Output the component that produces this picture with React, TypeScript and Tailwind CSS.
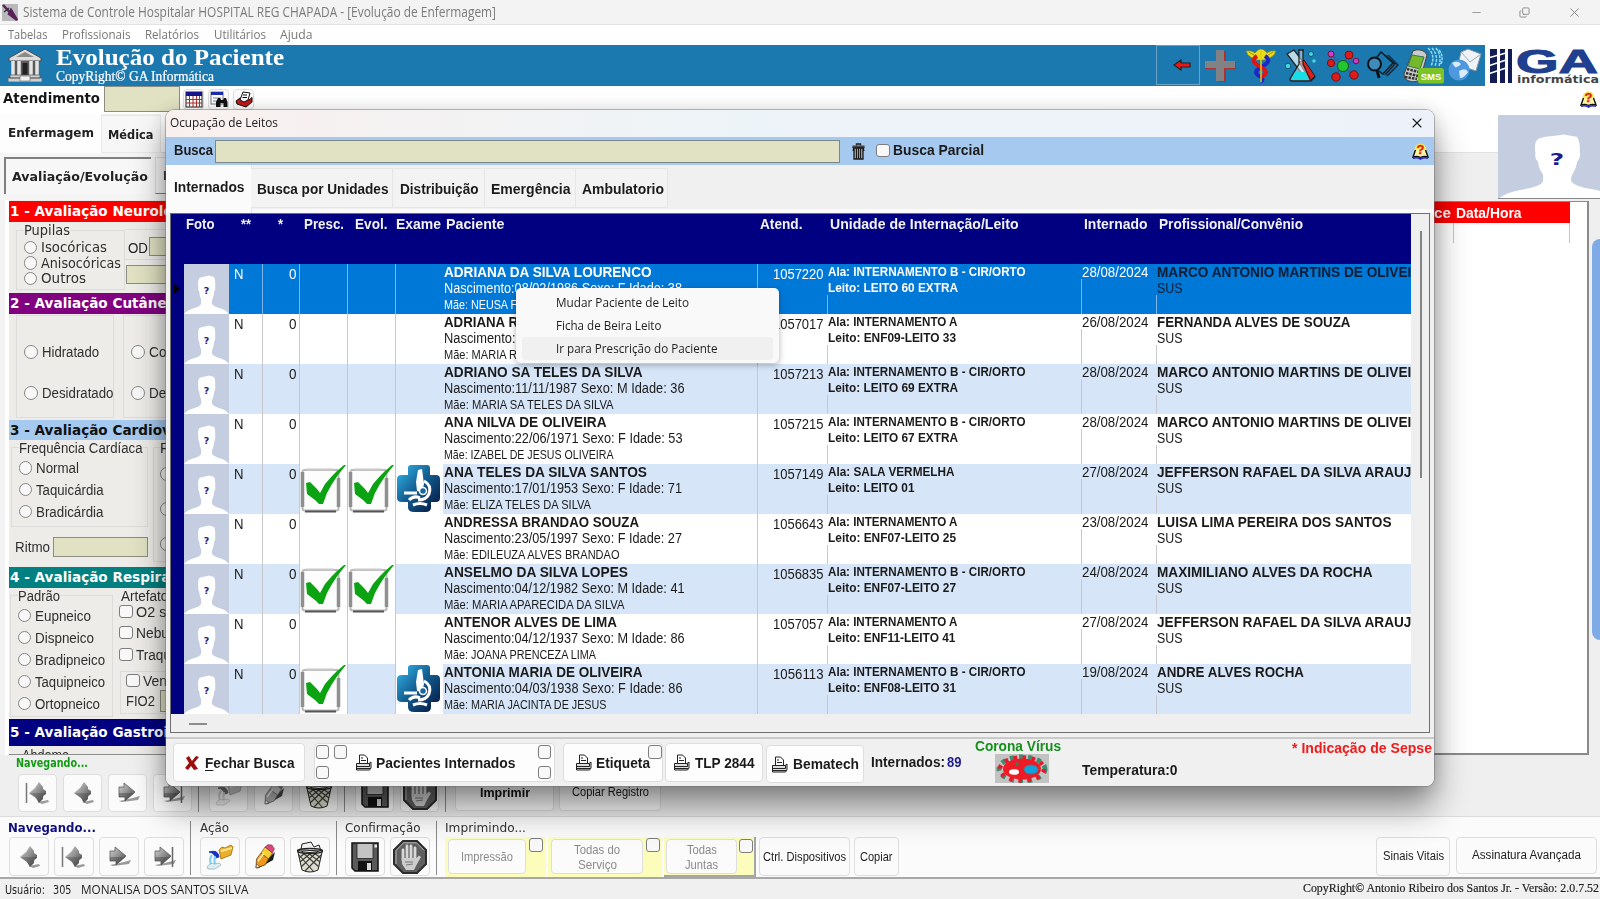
import { useLayoutEffect, useRef, useState } from "react";
import type { ReactNode } from "react";
import { X, Minus, Copy } from "lucide-react";

const arial = "font-['Liberation_Sans',Arial,sans-serif]";
const verdana = "font-['DejaVu_Sans',Verdana,sans-serif]";
const segoe = "font-['Open_Sans','Noto_Sans',sans-serif]";
const times = "font-['Liberation_Serif','Times_New_Roman',serif]";

/* Text that is condensed or expanded horizontally to a given width. */
function T({ w, className = "", children }: { w: number; className?: string; children: ReactNode }) {
  const ref = useRef<HTMLSpanElement>(null);
  const [scale, setScale] = useState(1);
  useLayoutEffect(() => {
    if (ref.current) setScale(w / ref.current.getBoundingClientRect().width);
  }, [w]);
  return (
    <span className={`block shrink-0 leading-none ${className}`} style={{ width: w }}>
      <span ref={ref} className="block w-max origin-left whitespace-pre" style={{ transform: `scaleX(${scale})` }}>
        {children}
      </span>
    </span>
  );
}

/* ---------- icons ---------- */

function Person({ className = "" }: { className?: string }) {
  return (
    <svg viewBox="0 0 45 50" preserveAspectRatio="none" className={className}>
      <rect width="45" height="50" fill="#c5cde1" />
      <path
        d="M0 50Q3 46 9 44.500Q16 42.500 17 40Q17.500 37 17 35Q15.500 32 15.300 28Q13.800 26 14.300 23Q13.500 16 15.500 14Q18 12.500 21 12.500L25 11.600L30 13Q31.400 15 31.200 22Q31.800 25 30.200 28Q29.800 32 28.500 35Q27.600 37 28 39.600Q29 42.500 36 44.200Q42 46 45 50Z"
        fill="#fff"
      />
      <text x="22.500" y="30" textAnchor="middle" fontSize="9.500" fontWeight="bold" fill="#1a1c8c" fontFamily="DejaVu Sans">
        ?
      </text>
    </svg>
  );
}

function CheckIcon() {
  return (
    <svg viewBox="0 0 47 50" className="h-[50px] w-[47px] shrink-0 bg-white">
      <rect x="2.500" y="6" width="36" height="40.500" rx="2" fill="#fdfdfd" stroke="#b9b9b9" strokeWidth="2" />
      <path d="M2.500 8V43M38.500 14V43" stroke="#8f8f8f" strokeWidth="3.500" />
      <path d="M5 47.500H36" stroke="#555" strokeWidth="2" />
      <path d="M6 5.500H34" stroke="#c8c8c8" strokeWidth="2" />
      <path d="M6 19L10 18L14 22L17 25L20 29L25 20L32 12L37 7L44 1L46 1L38 11L32 20L27 29L23 40L19 40L15 36L7 30Z" fill="#0ba312" />
    </svg>
  );
}

function ExamIcon() {
  return (
    <svg viewBox="0 0 47 50" className="h-[50px] w-[47px] shrink-0 bg-white">
      <defs>
        <linearGradient id="exam" x1="0" y1="0" x2="1" y2="1">
          <stop offset="0" stopColor="#35b9ee" />
          <stop offset=".45" stopColor="#146093" />
          <stop offset="1" stopColor="#04123c" />
        </linearGradient>
      </defs>
      <path d="M15 1H31Q34 1 34 4V11H40Q44 11 44 15V34Q44 38 40 38H35V43Q35 48 30 48H18Q12 48 12 43V38H6Q1 38 1 34V15Q1 11 6 11H12V4Q12 1 15 1Z" fill="url(#exam)" />
      <path d="M22 6L26 5L28 20L26 28L21 27L20 18Z" fill="#fff" />
      <path d="M28 17Q36 21 33 30Q30 36 22 36M8 29H21M13 36Q18 31 24 34M17 41Q24 38 31 41" fill="none" stroke="#fff" strokeWidth="3" />
      <circle cx="27" cy="27" r="3.500" fill="#176a9f" stroke="#fff" strokeWidth="1.500" />
    </svg>
  );
}

function Printer() {
  return (
    <svg viewBox="0 0 17 17" className="h-[17px] w-[17px] shrink-0">
      <path d="M4.500 9V1H9.500L12.500 4V9" fill="#fff" stroke="#222" />
      <path d="M6 4H8M6 6.500H11" stroke="#222" />
      <path d="M1.500 9.500H14L16 8V14L14.500 16H1.500Z" fill="#ddd" stroke="#222" />
      <path d="M1.500 12.500H14.500V9.500M1.500 14.500H15" stroke="#222" fill="none" />
    </svg>
  );
}

function BookHelp() {
  return (
    <svg viewBox="0 0 17 17" className="h-[17px] w-[17px] shrink-0">
      <circle cx="8.500" cy="6.500" r="6" fill="#f5e95a" />
      <path d="M3.500 7L1 14Q5 12.500 8.500 14.500Q12 12.500 16 14L13.500 7" fill="#fff3a8" stroke="#111" strokeWidth="1.400" />
      <path d="M1 15.300Q5 14 8.500 16Q12 14 16 15.300" stroke="#2626c8" strokeWidth="1.600" fill="none" />
      <text x="8.500" y="11" textAnchor="middle" fontSize="13" fontWeight="bold" fill="#e8201a" stroke="#e8201a" strokeWidth=".3" fontFamily="Liberation Sans">
        ?
      </text>
    </svg>
  );
}

function NavIcon({ kind }: { kind: "first" | "prev" | "next" | "last" }) {
  return (
    <svg viewBox="0 0 28 24" className="h-6 w-7 shrink-0">
      <defs>
        <linearGradient id="nav" x1="0" y1="0" x2="1" y2="1">
          <stop offset="0" stopColor="#d6d6d6" />
          <stop offset=".5" stopColor="#8e8e8e" />
          <stop offset="1" stopColor="#3c3c3c" />
        </linearGradient>
      </defs>
      {(kind === "first" || kind === "prev") && (
        <>
          <path d="M14 21L24 19L25 21L18 23Z" fill="#9a9a9a" />
          <path d="M15 1L19 6V8L22 10V13L19 15V18L15 22L12 17L5 12L11 7Z" fill="url(#nav)" />
          <path d="M5 12H22L15 22L12 17Z" fill="#444" opacity=".35" />
        </>
      )}
      {(kind === "next" || kind === "last") && (
        <>
          <path d="M5 20L15 18L26 15L24 19L8 21Z" fill="#9a9a9a" />
          <path d="M5 6H10V2L21 11L11 20V16H5Z" fill="url(#nav)" stroke="#5a5a5a" strokeWidth=".8" />
          <path d="M5 12H20L11 20V16H5Z" fill="#333" opacity=".35" />
        </>
      )}
      {kind === "first" && <path d="M2.500 2V22" stroke="#777" strokeWidth="1.500" />}
      {kind === "last" && <path d="M22.500 2V22" stroke="#666" strokeWidth="1.500" />}
    </svg>
  );
}

function PourIcon({ gray = false }: { gray?: boolean }) {
  return (
    <svg viewBox="0 0 28 26" className={gray ? "h-[26px] w-7 opacity-70 grayscale" : "h-[26px] w-7"}>
      <path d="M13 6L16 3L19 4L25 1L27 3L25 11L15 15Z" fill="#eab02c" stroke="#9c6b0a" strokeWidth=".8" />
      <path d="M15 7L26 4" stroke="#fbe58c" strokeWidth="2" />
      <path d="M13 13Q12 5 3 8Q9 9 9 14Z" fill="#1631c8" stroke="#1631c8" />
      <path d="M6 11Q3 15 5 20M9 12Q8 17 9 21" stroke="#7fd0f4" strokeWidth="2.200" fill="none" />
      <path d="M1 23Q4 18 9 20Q14 18 15 21L9 25H2Z" fill="#d8eef5" stroke="#8a9aa0" strokeWidth=".6" />
    </svg>
  );
}

function PencilIcon({ gray = false }: { gray?: boolean }) {
  return (
    <svg viewBox="0 0 24 26" className={gray ? "h-[26px] w-6 opacity-80 grayscale" : "h-[26px] w-6"}>
      <path d="M4 25L20 16L22 8L9 20Z" fill="#1c1c1c" />
      <path d="M3 24L3.500 15L8 9L15.500 15L12 21Z" fill="#f0981d" stroke="#5c3a08" strokeWidth=".7" />
      <path d="M8 9L12 3L19.500 9L15.500 15Z" fill="#f7cf35" stroke="#5c3a08" strokeWidth=".6" />
      <path d="M12 3L15 0.500L19 1L21.500 5L19.500 9Z" fill="#d94684" stroke="#611" strokeWidth=".4" />
      <path d="M3 24L3.500 20L7 22.500Z" fill="#ffe9c8" stroke="#222" strokeWidth=".5" />
      <path d="M5 17L11 9" stroke="#fff2b0" strokeWidth="1.500" />
    </svg>
  );
}

function BasketIcon() {
  return (
    <svg viewBox="0 0 28 32" className="h-8 w-7">
      <path d="M5 9L6 3L15 1L18 6L23 4L25 10Z" fill="#f3f3f3" stroke="#222" />
      <path d="M1.500 9Q14 14 26.500 9L22 29Q14 33 6 29Z" fill="#dcdccf" stroke="#222" />
      <path d="M3 14L18 31M6 11L23 26M12 12L24 21M18 12L25 17M25 14L9 30M21 11L5 26M15 12L4 21M9 12L3 17" stroke="#3a3a36" strokeWidth="1.100" />
      <ellipse cx="14" cy="10" rx="12.500" ry="2.500" fill="none" stroke="#222" strokeWidth="1.300" />
    </svg>
  );
}

function FloppyIcon() {
  return (
    <svg viewBox="0 0 28 30" className="h-[30px] w-7">
      <path d="M1 1H27V29H4L1 26Z" fill="#5a5a5a" stroke="#111" strokeWidth="1.500" />
      <rect x="6" y="1.500" width="16" height="15" fill="#c3c3c3" stroke="#222" strokeWidth=".8" />
      <rect x="7" y="19" width="14" height="10" fill="#111" />
      <rect x="16" y="21" width="4" height="7" fill="#d8d8d8" />
      <rect x="23.500" y="2.500" width="2.500" height="3" fill="#eee" />
    </svg>
  );
}

function StopIcon() {
  return (
    <svg viewBox="0 0 34 34" className="h-[34px] w-[34px]">
      <path d="M10 1H24L33 10V24L24 33H10L1 24V10Z" fill="#5f5f5f" stroke="#2c2c2c" strokeWidth="2" />
      <path d="M3 24V10.500L10.500 2.800H23.500L31.200 10.500" fill="none" stroke="#b5b5b5" />
      <path d="M10 10V20M14 6V19M18 6V19M22 8V19" stroke="#d8d8d8" strokeWidth="2.800" strokeLinecap="round" />
      <path d="M8.700 18H23.500L26 15.500L28 17L23.500 25L21 30H13L9 24Z" fill="#cdcdcd" />
      <path d="M12 22H20M13 25L20 24" stroke="#777" />
    </svg>
  );
}

/* ---------- small controls ---------- */

function Radio({ label, w, className = "", font = arial }: { label: string; w: number; className?: string; font?: string }) {
  return (
    <div className={`flex items-center gap-1 ${className}`}>
      <span className="size-[13.500px] shrink-0 rounded-full border border-[#858585] bg-[#f8f8f8]" />
      <T w={w} className={`text-[14px] text-[#2f2f2f] ${font}`}>{label}</T>
    </div>
  );
}

function Box({ className = "" }: { className?: string }) {
  return <span className={`block size-[13.500px] shrink-0 rounded-[3px] border border-[#7d7d7d] bg-[#f8f8f8] ${className}`} />;
}

function Btn({ className = "", children }: { className?: string; children?: ReactNode }) {
  return (
    <div className={`flex shrink-0 items-center justify-center rounded-[4px] border border-[#dedede] bg-[#fbfbfb] ${className}`}>{children}</div>
  );
}

function SectionBar({ className = "", children }: { className?: string; children: ReactNode }) {
  return (
    <div className={`flex shrink-0 items-center overflow-hidden pl-px text-[13.600px] font-bold leading-none whitespace-nowrap ${verdana} ${className}`}>
      {children}
    </div>
  );
}

/* ---------- application frame ---------- */

function TitleBar() {
  return (
    <div className="flex h-[25px] shrink-0 items-center border-b border-[#e2e2e2] bg-[#f3f3f3]">
      <svg viewBox="0 0 16 17" className="ml-0.5 h-[17px] w-4 shrink-0 bg-[#b9b9bd]">
        <path d="M1 1L14 15M9 6L15 16L7 10Z" stroke="#5a2158" strokeWidth="2.500" fill="#8a3a85" />
        <path d="M2 8L7 4" stroke="#333" strokeWidth="1.500" />
      </svg>
      <T w={473} className={`ml-[5px] text-[14.500px] text-[#7b7b7b] ${segoe}`}>
        Sistema de Controle Hospitalar HOSPITAL REG CHAPADA - [Evolução de Enfermagem]
      </T>
      <Minus className="ml-auto size-[13px] text-[#8a8a8a]" strokeWidth={1.5} />
      <Copy className="ml-[36px] size-[11px] -scale-x-100 rotate-180 text-[#8a8a8a]" strokeWidth={2} />
      <X className="mr-[18px] ml-[37px] size-[15px] text-[#8a8a8a]" strokeWidth={1.6} />
    </div>
  );
}

function MenuBar() {
  return (
    <div className={`flex h-5 shrink-0 items-center bg-white pb-0.5 pl-[7.500px] text-[13px] text-[#777] ${segoe}`}>
      <T w={39.5}>Tabelas</T>
      <T w={68.5} className="ml-[14.500px]">Profissionais</T>
      <T w={54} className="ml-[15px]">Relatórios</T>
      <T w={52} className="ml-[14.500px]">Utilitários</T>
      <T w={32.5} className="ml-[14.500px]">Ajuda</T>
    </div>
  );
}

function HeaderBar() {
  return (
    <div className="flex h-[41px] shrink-0 bg-[#1c79b0]">
      <svg viewBox="0 0 34 34" className="mt-[3px] ml-2 h-[34px] w-[34px] shrink-0">
        <path d="M1 10L17 1L33 10V13H1Z" fill="#dcdcdc" stroke="#4a4a4a" />
        <path d="M8 9L17 4L26 9Z" fill="#8a8a8a" />
        <path d="M3 13H31V27H3Z" fill="#5b5b5b" />
        <path d="M5 13V27M11 13V27M23 13V27M29 13V27" stroke="#e6e6e6" strokeWidth="3.500" />
        <rect x="14.500" y="15" width="5" height="13" fill="#222" />
        <path d="M2 27H32V30H2ZM0 30H34V34H0Z" fill="#cfcfcf" stroke="#555" strokeWidth=".7" />
        <path d="M12 28H22V33H12Z" fill="#f0f0f0" stroke="#666" strokeWidth=".6" />
      </svg>
      <div className={`ml-[14px] flex flex-col text-white ${times}`}>
        <T w={228} className="text-[24px] font-bold">Evolução do Paciente</T>
        <T w={158} className="mt-px text-[14px] [-webkit-text-stroke:0.2px_white]">CopyRight© GA Informática</T>
      </div>
      <div className="ml-auto flex">
        <div className="mr-[4px] flex h-[40px] w-[44px] items-center justify-end border border-[#6aa2c4] pr-2">
          <svg viewBox="0 0 18 12" className="h-3 w-[18px]">
            <path d="M1 6L8 1V4H17V8H8V11Z" fill="#f01515" stroke="#222" strokeWidth="1.200" />
          </svg>
        </div>
        <svg viewBox="0 0 32 32" className="mt-[5px] size-8">
          <path d="M14 1H22V12H32V19H22V32H14V19H1V12H12" fill="#b0302c" />
          <path d="M12 0H20V11H31V18H20V31H12V18H1V11H12Z" fill="#808286" />
        </svg>
        <svg viewBox="0 0 32 34" className="mt-1 ml-[9px] h-[34px] w-8">
          <path d="M1 2Q7 1 10 4Q13 0 16 0Q19 0 22 4Q25 1 31 2L29 6L25 9L20 11H12L7 9L3 6Z" fill="#eadc18" stroke="#8b7d05" strokeWidth=".6" />
          <path d="M4 3L12 8M28 3L20 8" stroke="#8b7d05" strokeWidth=".8" />
          <path d="M20 7Q26 11 21 15Q16 18 12 21Q9 25 16 28Q19 30 16 33" fill="none" stroke="#1d27c9" strokeWidth="4" />
          <path d="M12 7Q6 11 11 15Q16 18 20 21Q23 25 16 28" fill="none" stroke="#dc1515" strokeWidth="4" />
          <path d="M16 2V33" stroke="#e5cc16" strokeWidth="1.500" />
        </svg>
        <svg viewBox="0 0 32 34" className="mt-1 ml-2 h-[34px] w-8">
          <path d="M2 5L9 1L30 28L26 32L21 30Z" fill="#b7dbe9" stroke="#222" strokeWidth="1.300" />
          <path d="M14 13L19 11L30 27L25 32Z" fill="#e01d1d" stroke="#222" />
          <path d="M13 1H19M14 1V15L5 30Q5 32 7 32H24Q26 32 25 30L18 15V1" fill="#d9f4f6" fillOpacity=".5" stroke="#222" strokeWidth="1.300" />
          <path d="M10 23H20L24 31H6Z" fill="#17dde6" />
          <circle cx="3" cy="17" r="2.800" fill="#3fd9dc" stroke="#157" />
          <circle cx="26" cy="5" r="2.500" fill="#3fd9dc" stroke="#157" />
          <circle cx="29" cy="12" r="1.800" fill="#3fd9dc" />
        </svg>
        <svg viewBox="0 0 34 34" className="mt-1 ml-[9px] h-[34px] w-[34px]">
          <path d="M5 5L16 16L23 6M5 14L16 17L28 12M9 27L16 17L27 25" stroke="#2c62a8" strokeWidth="1.800" fill="none" />
          <circle cx="5" cy="5" r="3" fill="#d03bd2" stroke="#713" />
          <circle cx="5" cy="14" r="3.600" fill="#df1a1a" stroke="#711" />
          <circle cx="23" cy="6" r="4" fill="#df1a1a" stroke="#711" />
          <circle cx="30" cy="12" r="2.800" fill="#d03bd2" stroke="#713" />
          <circle cx="17" cy="17" r="5.500" fill="#22c62d" stroke="#175a17" />
          <circle cx="10" cy="28" r="4.200" fill="#df1a1a" stroke="#711" />
          <circle cx="28" cy="26" r="4.200" fill="#df1a1a" stroke="#711" />
        </svg>
        <svg viewBox="0 0 34 30" className="mt-[6px] ml-[6px] h-[30px] w-[34px]">
          <path d="M11 6L15 1L27 12L17 23L13 20" fill="none" stroke="#141a22" strokeWidth="1.500" />
          <path d="M19 4L29 13L19 24M22 4L32 14L21 25" fill="none" stroke="#141a22" strokeWidth="1.200" />
          <circle cx="8.500" cy="13" r="6.500" fill="#3f8cbc" stroke="#0d1015" strokeWidth="2" />
          <path d="M11 19L13 27" stroke="#0d1015" strokeWidth="3" />
        </svg>
        <svg viewBox="0 0 42 38" className="mt-0.5 ml-[3px] h-[38px] w-[42px]">
          <path d="M10 4Q16 1 22 5L24 8L17 33Q10 37 2 32L1 27Z" fill="#c9ccca" stroke="#444" />
          <path d="M9 8L21 10L17 22L5 19Z" fill="#76b82a" stroke="#375" />
          <path d="M4 22L16 25M3 26L15 29M2 30L14 32" stroke="#333" strokeWidth="2.500" strokeDasharray="2.500 1" />
          <path d="M25 1Q33 9 28 19M29 1Q36 9 32 19M33 1Q39 9 36 19M36 3Q41 9 38 17" stroke="#8adcf6" strokeWidth="1.500" strokeDasharray="3 1" fill="none" />
          <rect x="15" y="21" width="26" height="15.500" rx="2.500" fill="#7cc326" />
          <text x="28" y="32.500" fontSize="9.500" fontWeight="bold" fill="#fff" textAnchor="middle" fontFamily="Liberation Sans">SMS</text>
        </svg>
        <svg viewBox="0 0 34 34" className="mt-[3px] mr-[3px] ml-[3px] h-[34px] w-[34px]">
          <path d="M13 4L20 1L33 6L28 23L10 17Z" fill="#f0f3f6" stroke="#8393a3" />
          <path d="M13 4L22 14L33 6" fill="none" stroke="#9aa8b8" />
          <circle cx="11" cy="22" r="10.500" fill="#4f98df" />
          <path d="M4 15Q10 12 13 16Q10 20 7 19ZM11 23Q18 19 20 24Q16 30 12 30Z" fill="#d9ecfa" />
        </svg>
        <div className="w-[115px] bg-white">
          <svg viewBox="0 0 115 41" className="h-[41px] w-[115px]">
            <path d="M5 4H12V38H5ZM15 4H20V38H15ZM23 4H27V38H23Z" fill="#141c54" />
            <path d="M3 13L21 8M3 21L21 15M3 29L21 23" stroke="#fff" strokeWidth="1.500" />
            <text x="31" y="28" fontSize="33" fontWeight="bold" stroke="#1f3f8f" textLength="82" lengthAdjust="spacingAndGlyphs" fill="#1f3f8f" fontFamily="Liberation Sans">GA</text>
            <text x="32" y="38" fontSize="10" fontWeight="bold" textLength="82" lengthAdjust="spacingAndGlyphs" fill="#444" fontFamily="DejaVu Sans">informática</text>
          </svg>
        </div>
      </div>
    </div>
  );
}

function AttendanceRow() {
  return (
    <div className="flex h-[28px] shrink-0 items-start bg-white">
      <T w={97} className={`mt-[6px] ml-[3px] text-[13.500px] font-bold text-[#151515] ${verdana}`}>Atendimento</T>
      <div className="ml-[4px] h-[26px] w-[76px] border border-[#8c8c80] bg-[#e1e2c3]" />
      <Btn className="mt-[3px] ml-[3px] size-[21px]">
        <svg viewBox="0 0 18 17" className="h-[17px] w-[18px]">
          <rect x="1" y="1" width="16" height="15" fill="#fff" stroke="#222" />
          <rect x="1" y="1" width="16" height="4" fill="#14148c" />
          <path d="M1 8.500H17M1 12H17M4.500 5V16M8 5V16M11.500 5V16M14.500 5V16" stroke="#a33" />
        </svg>
      </Btn>
      <Btn className="mt-[3px] ml-1 size-[21px]">
        <svg viewBox="0 0 18 17" className="h-[17px] w-[18px]">
          <rect x="1" y="1" width="12" height="12" fill="#fff" stroke="#777" />
          <rect x="1" y="1" width="12" height="3" fill="#1c2cb0" />
          <path d="M3 7H11M3 10H8" stroke="#68a" />
          <path d="M6 16V11L8 7H10L11 9H13L14 7H16L17.500 11V16H13.500V12H10.500V16Z" fill="#111" />
        </svg>
      </Btn>
      <Btn className="mt-[3px] ml-1 size-[21px]">
        <svg viewBox="0 0 18 17" className="h-[17px] w-[18px]">
          <path d="M1 10L5 7L14 9L17 6.500V11L11 16L2 13Z" fill="#c81616" stroke="#111" />
          <path d="M5 9L8 1L15 2L13 9L9 11Z" fill="#fff" stroke="#111" />
          <path d="M8 4H12M7.500 6.500H12" stroke="#111" fill="none" />
        </svg>
      </Btn>
      <div className="mt-[5px] mr-[3px] ml-auto"><BookHelp /></div>
    </div>
  );
}

function FormColumn() {
  const input = "border border-[#8c8c80] bg-[#e1e2c3]";
  return (
    <div className="flex h-[555px] w-[157px] shrink-0 flex-col overflow-hidden border-b border-[#8d8d8d] bg-[#edece8] pt-px">
      <SectionBar className="h-[21px] bg-[#fe0000] pt-px text-white">1 - Avaliação Neurológica</SectionBar>
      <div className="flex h-[71px] shrink-0">
        <div className="mt-2 ml-[7px] h-[60px] w-[109px] shrink-0 border border-[#dcdcda]">
          <T w={46} className={`-mt-[7px] ml-[7px] bg-[#edece8] text-[13.500px] text-[#2f2f2f] ${verdana}`}>Pupilas</T>
          <Radio label="Isocóricas" w={66} font={verdana} className="mt-0.5 ml-[6.500px] h-[15.500px]" />
          <Radio label="Anisocóricas" w={80} font={verdana} className="ml-[6.500px] h-[15.500px]" />
          <Radio label="Outros" w={45} font={verdana} className="ml-[6.500px] h-[15.500px]" />
        </div>
        <div className="mt-[7px] w-[60px] shrink-0 border-t border-[#dcdcda]">
          <div className="flex h-[30px] items-end border-b border-[#dcdcda] pb-[3px] pl-[3px]">
            <T w={20} className={`mb-px text-[14px] text-[#222] ${arial}`}>OD</T>
            <div className={`ml-px h-[19px] w-9 shrink-0 ${input}`} />
          </div>
          <div className={`mt-[5px] ml-px h-[19px] w-[60px] ${input}`} />
        </div>
      </div>
      <SectionBar className="h-[21px] bg-[#800080] pt-px text-white">2 - Avaliação Cutânea</SectionBar>
      <div className="flex h-[106px] shrink-0 pt-px">
        <div className="ml-[7px] h-[103px] w-[98px] shrink-0 border border-[#dcdcda] pl-[7px]">
          <Radio label="Hidratado" w={57} className="mt-[29px]" />
          <Radio label="Desidratado" w={71.5} className="mt-[27px]" />
        </div>
        <div className="ml-[9px] h-[103px] w-[98px] shrink-0 border border-[#dcdcda] pl-[7px]">
          <Radio label="Corada" w={45} className="mt-[29px]" />
          <Radio label="Descorada" w={65} className="mt-[27px]" />
        </div>
      </div>
      <SectionBar className="h-5 bg-[#a6c9f0] pt-px text-[#111]">3 - Avaliação Cardiovascular</SectionBar>
      <div className="flex h-[127px] shrink-0">
        <div className="ml-0.5 w-[137px] shrink-0">
          <div className="mt-[7px] h-[80px] border border-[#dcdcda]">
            <T w={123.5} className={`-mt-[7px] ml-[6.500px] bg-[#edece8] text-[14px] text-[#2f2f2f] ${arial}`}>Frequência Cardíaca</T>
            <Radio label="Normal" w={43} className="mt-1.5 ml-[6.500px]" />
            <Radio label="Taquicárdia" w={67.5} className="mt-[7.500px] ml-[6.500px]" />
            <Radio label="Bradicárdia" w={67.5} className="mt-[8px] ml-[6.500px]" />
          </div>
          <div className="mt-2.5 flex items-center">
            <T w={35} className={`ml-[3.500px] text-[14px] text-[#2f2f2f] ${arial}`}>Ritmo</T>
            <div className={`ml-[3.500px] h-5 w-[95px] ${input}`} />
          </div>
        </div>
        <div className="mt-[7px] ml-[5px] h-[115px] w-[70px] shrink-0 border border-[#dcdcda]">
          <T w={34.5} className={`-mt-[7px] ml-[6px] text-[14px] text-[#2f2f2f] ${arial}`}>Rede</T>
          <Radio label="Sim" w={24} className="mt-[12px] ml-[6px]" />
          <Radio label="Não" w={24} className="mt-[21px] ml-[6px]" />
          <Radio label="Não" w={24} className="mt-[21px] ml-[6px]" />
        </div>
      </div>
      <SectionBar className="h-[20.500px] bg-[#008080] pt-px text-white">4 - Avaliação Respiratória</SectionBar>
      <div className="flex h-[131.500px] shrink-0">
        <div className="mt-[7px] ml-px h-[122px] w-[103px] shrink-0 border border-[#dcdcda]">
          <T w={42} className={`-mt-[7px] ml-[6.500px] bg-[#edece8] text-[14px] text-[#2f2f2f] ${arial}`}>Padrão</T>
          <Radio label="Eupneico" w={56} className="mt-[6px] ml-[6.500px]" />
          <Radio label="Dispneico" w={59} className="mt-[8px] ml-[6.500px]" />
          <Radio label="Bradipneico" w={70} className="mt-[8px] ml-[6.500px]" />
          <Radio label="Taquipneico" w={70} className="mt-[8px] ml-[6.500px]" />
          <Radio label="Ortopneico" w={65} className="mt-[8px] ml-[6.500px]" />
        </div>
        <div className={`ml-[6px] flex shrink-0 flex-col text-[14px] text-[#2f2f2f] ${arial}`}>
          <T w={54} className="mt-px ml-0.5">Artefatos</T>
          <div className="mt-[2px] flex items-center gap-[3px]"><Box /><T w={71}>O2 suporte</T></div>
          <div className="mt-[7px] flex items-center gap-[3px]"><Box /><T w={76}>Nebulização</T></div>
          <div className="mt-2 flex items-center gap-[3px]"><Box /><T w={90}>Traqueostomia</T></div>
          <div className="mt-[9px] ml-px h-[43px] border border-[#dcdcda] pl-[5px]">
            <div className="mt-0.5 flex items-center gap-[3px]"><Box /><T w={64}>Ventilação</T></div>
            <div className="mt-0.5 flex items-center"><T w={29}>FIO2</T><div className={`ml-[5px] h-[22px] w-10 ${input}`} /></div>
          </div>
        </div>
      </div>
      <SectionBar className="h-[26.500px] bg-[#000080] pt-px text-white">5 - Avaliação Gastrointestinal</SectionBar>
      <T w={47} className={`mt-0.5 ml-[13px] text-[14px] text-[#2f2f2f] ${arial}`}>Abdome</T>
    </div>
  );
}

function RecordArea() {
  return (
    <div className="flex h-[641px] shrink-0 flex-col bg-[#efefef]">
      <div className="flex h-[39px] shrink-0">
        <div className="flex w-[101px] bg-[#fdfdfd] pl-[8px]">
          <T w={86} className={`mt-[12px] text-[13px] font-bold text-[#222] ${verdana}`}>Enfermagem</T>
        </div>
        <div className="mt-px flex w-[60px] border border-[#e9e9e9] bg-[#f7f7f7] pl-[6px]">
          <T w={45.5} className={`mt-[12px] text-[13px] font-bold text-[#222] ${verdana}`}>Médica</T>
        </div>
        <div className="grow border-b border-[#e2e2e2] bg-white" />
      </div>
      <div className="flex h-[47px] shrink-0 bg-[#f5f5f5] pt-1 pl-1">
        <div className="flex h-[37px] w-[147px] border-t-2 border-l-2 border-[#808080] bg-[#f7f7f7] pl-[5.500px]">
          <T w={136} className={`mt-[11px] text-[13px] font-bold text-[#222] ${verdana}`}>Avaliação/Evolução</T>
        </div>
        <div className="ml-1 flex h-[37px] w-[100px] border border-[#ddd] border-b-[#808080] bg-[#f7f7f7] pl-[7px]">
          <T w={80} className={`mt-[11px] text-[13px] font-bold text-[#222] ${verdana}`}>Diagnóstico</T>
        </div>
        <div className="-mt-1 grow bg-[#efefef]" />
      </div>
      <div className="flex h-[555px] shrink-0">
        <div className="w-[9px] shrink-0 border-r-4 border-white bg-[#f3f3f3]" />
        <FormColumn />
        <div className="mt-px flex w-[1427px] flex-col border-t border-r-2 border-b-2 border-[#8a8a8a] bg-white">
          <div className={`flex h-[21px] w-[1404px] items-center bg-[#fe0000] pl-[1268px] text-[14px] font-bold text-white ${arial}`}>
            <T w={17}>ce</T>
            <T w={65.5} className="ml-[5px]">Data/Hora</T>
          </div>
          <div className="flex h-5 w-[1404px] border-r border-[#c4c4c4]">
            <div className="w-[1288px] border-r border-[#c4c4c4]" />
          </div>
        </div>
        <div className="mt-[39px] ml-[3px] h-[401px] w-2 rounded-l-full bg-[#7eaae6]" />
      </div>
    </div>
  );
}

function UpperActions() {
  return (
    <div className="flex h-[62px] shrink-0 flex-col border-b border-[#dcdcdc] bg-[#efefef]">
      <T w={72} className={`mt-[3px] ml-[16px] text-[11.500px] font-bold text-[#129a12] ${verdana}`}>Navegando...</T>
      <div className="mt-1 flex">
        <Btn className="ml-[18px] h-[38px] w-[39px]"><NavIcon kind="first" /></Btn>
        <Btn className="ml-[6px] h-[38px] w-[39px]"><NavIcon kind="prev" /></Btn>
        <Btn className="ml-[6px] h-[38px] w-[39px]"><NavIcon kind="next" /></Btn>
        <Btn className="ml-[6px] h-[38px] w-[39px]"><NavIcon kind="last" /></Btn>
        <div className="ml-[6px] w-px bg-[#8a8a8a]" />
        <Btn className="ml-[10px] h-[38px] w-[39px]"><PourIcon gray /></Btn>
        <Btn className="ml-[6px] h-[38px] w-[39px]"><PencilIcon gray /></Btn>
        <Btn className="ml-[6px] h-[38px] w-[39px]"><BasketIcon /></Btn>
        <div className="ml-[6px] w-px bg-[#8a8a8a]" />
        <Btn className="ml-[10px] h-[38px] w-[39px]"><FloppyIcon /></Btn>
        <Btn className="ml-[6px] h-[38px] w-[39px]"><StopIcon /></Btn>
        <div className="ml-[6px] w-px bg-[#8a8a8a]" />
        <Btn className="ml-[9px] h-[37px] w-[99px]">
          <T w={50} className={`text-[13px] font-bold text-[#111] ${arial}`}>Imprimir</T>
        </Btn>
        <Btn className="ml-[5px] h-[37px] w-[102px]">
          <T w={77} className={`text-[12.500px] text-[#222] ${arial}`}>Copiar Registro</T>
        </Btn>
      </div>
    </div>
  );
}

function Group({ title, w, className = "", children }: { title: string; w: number; className?: string; children: ReactNode }) {
  return (
    <div className={`flex flex-col ${className}`}>
      <T w={w} className={`mt-[4px] text-[13px] text-[#333] ${verdana}`}>{title}</T>
      <div className="mt-[3px] flex">{children}</div>
    </div>
  );
}

function LowerActions() {
  const off = `text-[13px] text-[#8b8b8b] ${arial}`;
  return (
    <div className="flex h-[62px] shrink-0 border-b-2 border-[#a8a8a8] bg-[#fbfbfb]">
      <div className="flex flex-col">
        <T w={88} className={`mt-[4px] ml-[8px] text-[13px] font-bold text-[#10107c] ${verdana}`}>Navegando...</T>
        <div className="mt-[3px] flex">
          <Btn className="ml-[9px] h-[39px] w-10"><NavIcon kind="prev" /></Btn>
          <Btn className="ml-[5px] h-[39px] w-10"><NavIcon kind="first" /></Btn>
          <Btn className="ml-[5px] h-[39px] w-10"><NavIcon kind="next" /></Btn>
          <Btn className="ml-[5px] h-[39px] w-10"><NavIcon kind="last" /></Btn>
        </div>
      </div>
      <div className="mt-1 ml-1.5 h-[54px] w-px bg-[#8a8a8a]" />
      <Group title="Ação" w={29} className="ml-[9px]">
        <Btn className="h-[39px] w-10 border-[#cfcfcf]"><PourIcon /></Btn>
        <Btn className="ml-[5px] h-[39px] w-10 border-[#cfcfcf]"><PencilIcon /></Btn>
        <Btn className="ml-[5px] h-[39px] w-10"><BasketIcon /></Btn>
      </Group>
      <div className="mt-1 ml-[6px] h-[54px] w-px bg-[#8a8a8a]" />
      <Group title="Confirmação" w={75.5} className="ml-2">
        <Btn className="h-[39px] w-10"><FloppyIcon /></Btn>
        <Btn className="ml-[5px] h-[39px] w-10"><StopIcon /></Btn>
      </Group>
      <div className="mt-1 ml-[6px] h-[54px] w-px bg-[#8a8a8a]" />
      <Group title="Imprimindo..." w={81} className="ml-[8px]">
        <div className="flex h-10 w-[101px] bg-[#fdfdbb] pt-0.5 pl-[3px]">
          <Btn className="h-[35px] w-[78px] bg-[#f7f7f3]"><T w={52} className={off}>Impressão</T></Btn>
          <Box className="-mt-px ml-[3px]" />
        </div>
        <div className="ml-0.5 flex h-10 w-[114px] bg-[#fdfdbb] pt-0.5 pl-[3px]">
          <Btn className="h-[35px] w-[92px] flex-col gap-0.5 bg-[#f7f7f3]">
            <T w={46} className={off}>Todas do</T>
            <T w={39} className={off}>Serviço</T>
          </Btn>
          <Box className="-mt-px ml-[3px]" />
        </div>
        <div className="ml-0.5 flex h-10 w-[92px] border-r-2 border-b-2 border-[#a5a5a5] bg-[#fdfdbb] pt-[2px] pl-[2px]">
          <Btn className="h-[35px] w-[71px] flex-col gap-0.5 bg-[#f7f7f3]">
            <T w={30} className={off}>Todas</T>
            <T w={33} className={off}>Juntas</T>
          </Btn>
          <Box className="ml-0.5" />
        </div>
        <Btn className="ml-[3px] h-[39px] w-[91px] border-[#cfcfcf]"><T w={83} className={`text-[13px] text-[#222] ${arial}`}>Ctrl. Dispositivos</T></Btn>
        <Btn className="ml-1 h-[39px] w-[45px] border-[#cfcfcf]"><T w={32.5} className={`text-[13px] text-[#222] ${arial}`}>Copiar</T></Btn>
      </Group>
      <Btn className="mt-[20px] ml-auto h-[39px] w-[74px] border-[#cfcfcf]"><T w={61} className={`text-[12.500px] text-[#222] ${arial}`}>Sinais Vitais</T></Btn>
      <Btn className="mt-[20px] mr-[3px] ml-1.5 h-[37px] w-[141px] border-[#cfcfcf]"><T w={109} className={`text-[12.500px] text-[#222] ${arial}`}>Assinatura Avançada</T></Btn>
    </div>
  );
}

function StatusBar() {
  return (
    <div className={`flex h-5 shrink-0 bg-[#f0f0f0] pl-[5px] text-[12.500px] text-[#222] ${verdana}`}>
      <T w={40} className="mt-[5px]">Usuário:</T>
      <T w={18.5} className="mt-[5px] ml-2">305</T>
      <T w={167.5} className={`mt-[4px] ml-[9px] text-[13px] ${segoe}`}>MONALISA DOS SANTOS SILVA</T>
      <T w={296} className={`mt-[2px] mr-[1.500px] ml-auto text-[13px] [-webkit-text-stroke:0.2px_#222] ${times}`}>
        CopyRight© Antonio Ribeiro dos Santos Jr. - Versão: 2.0.7.52
      </T>
    </div>
  );
}

/* ---------- bed occupation dialog ---------- */

type Row = {
  name: [string, number];
  born: [string, number];
  mother: [string, number];
  code: string;
  ward: [string, number];
  bed: [string, number];
  date: string;
  doctor: [string, number];
  presc?: boolean;
  evol?: boolean;
  exam?: boolean;
};

const wardB: [string, number] = ["Ala: INTERNAMENTO B - CIR/ORTO", 197.5];
const wardA: [string, number] = ["Ala: INTERNAMENTO A", 129.5];
const marco: [string, number] = ["MARCO ANTONIO MARTINS DE OLIVEIRA", 274];
const jefferson: [string, number] = ["JEFFERSON RAFAEL DA SILVA ARAUJO", 265];

const rows: Row[] = [
  { name: ["ADRIANA DA SILVA LOURENCO", 207.5], born: ["Nascimento:08/02/1986 Sexo: F Idade: 38", 238], mother: ["Mãe: NEUSA F", 73], code: "1057220", ward: wardB, bed: ["Leito: LEITO 60 EXTRA", 130], date: "28/08/2024", doctor: marco },
  { name: ["ADRIANA R", 74], born: ["Nascimento:", 71.5], mother: ["Mãe: MARIA R", 73], code: "1057017", ward: wardA, bed: ["Leito: ENF09-LEITO 33", 128], date: "26/08/2024", doctor: ["FERNANDA ALVES DE SOUZA", 193.5] },
  { name: ["ADRIANO SA TELES DA SILVA", 198.5], born: ["Nascimento:11/11/1987 Sexo: M Idade: 36", 240.5], mother: ["Mãe: MARIA SA TELES DA SILVA", 169.5], code: "1057213", ward: wardB, bed: ["Leito: LEITO 69 EXTRA", 130], date: "28/08/2024", doctor: marco },
  { name: ["ANA NILVA DE OLIVEIRA", 162.5], born: ["Nascimento:22/06/1971 Sexo: F Idade: 53", 238.5], mother: ["Mãe: IZABEL DE JESUS OLIVEIRA", 169.5], code: "1057215", ward: wardB, bed: ["Leito: LEITO 67 EXTRA", 130], date: "28/08/2024", doctor: marco },
  { name: ["ANA TELES DA SILVA SANTOS", 203], born: ["Nascimento:17/01/1953 Sexo: F Idade: 71", 238], mother: ["Mãe: ELIZA TELES DA SILVA", 147], code: "1057149", ward: ["Ala: SALA VERMELHA", 126.5], bed: ["Leito: LEITO 01", 86.5], date: "27/08/2024", doctor: jefferson, presc: true, evol: true, exam: true },
  { name: ["ANDRESSA BRANDAO SOUZA", 195], born: ["Nascimento:23/05/1997 Sexo: F Idade: 27", 238], mother: ["Mãe: EDILEUZA ALVES BRANDAO", 175.5], code: "1056643", ward: wardA, bed: ["Leito: ENF07-LEITO 25", 128], date: "23/08/2024", doctor: ["LUISA LIMA PEREIRA DOS SANTOS", 234.5] },
  { name: ["ANSELMO DA SILVA LOPES", 184], born: ["Nascimento:04/12/1982 Sexo: M Idade: 41", 240.5], mother: ["Mãe: MARIA APARECIDA DA SILVA", 180.5], code: "1056835", ward: wardB, bed: ["Leito: ENF07-LEITO 27", 128], date: "24/08/2024", doctor: ["MAXIMILIANO ALVES DA ROCHA", 215.5], presc: true, evol: true },
  { name: ["ANTENOR ALVES DE LIMA", 173], born: ["Nascimento:04/12/1937 Sexo: M Idade: 86", 240.5], mother: ["Mãe: JOANA PRENCEZA LIMA", 152], code: "1057057", ward: wardA, bed: ["Leito: ENF11-LEITO 41", 127.5], date: "27/08/2024", doctor: jefferson },
  { name: ["ANTONIA MARIA DE OLIVEIRA", 198.5], born: ["Nascimento:04/03/1938 Sexo: F Idade: 86", 238.5], mother: ["Mãe: MARIA JACINTA DE JESUS", 162.5], code: "1056113", ward: wardB, bed: ["Leito: ENF08-LEITO 31", 128], date: "19/08/2024", doctor: ["ANDRE ALVES ROCHA", 147], presc: true, exam: true },
];

function GridRow({ row, index }: { row: Row; index: number }) {
  const selected = index === 0;
  const tone = selected ? "bg-[#0078d7] text-white" : index % 2 ? "bg-white text-[#1a1a1a]" : "bg-[#d6e5f8] text-[#1a1a1a]";
  const line = selected ? "border-[#7db6e6]" : "border-[#c6c8cc]";
  const ink = selected ? "text-[#0c1c33]" : "";
  return (
    <div className={`flex h-[50px] shrink-0 overflow-hidden ${tone}`}>
      <div className="flex w-[13px] shrink-0 items-center bg-[#000080]">
        {selected && <span className="ml-[3px] h-0 w-0 border-y-[5px] border-l-[6px] border-y-transparent border-l-black" />}
      </div>
      <Person className="h-[50px] w-[45px] shrink-0" />
      <div className={`w-[34px] shrink-0 border-r pt-[2.500px] pl-[4.500px] text-[14px] ${line}`}><T w={9.5}>N</T></div>
      <div className={`w-[37px] shrink-0 border-r pt-[2.500px] pl-[26px] text-[14px] ${line}`}><T w={7.5}>0</T></div>
      <div className={`w-12 shrink-0 border-r ${line}`}>{row.presc && <CheckIcon />}</div>
      <div className={`w-12 shrink-0 border-r ${line}`}>{row.evol && <CheckIcon />}</div>
      <div className="w-[47px] shrink-0">{row.exam && <ExamIcon />}</div>
      <div className={`w-[315px] shrink-0 overflow-hidden border-r pt-px pl-px ${line}`}>
        <T w={row.name[1]} className="text-[14px] font-bold">{row.name[0]}</T>
        <T w={row.born[1]} className="mt-[2px] text-[14px]">{row.born[0]}</T>
        <T w={row.mother[1]} className="mt-[3.500px] text-[12px]">{row.mother[0]}</T>
      </div>
      <div className="flex w-[70px] shrink-0 justify-end pt-[2.500px] pr-[5px]"><T w={50.5} className="text-[14px]">{row.code}</T></div>
      <div className="w-[254px] shrink-0">
        <T w={row.ward[1]} className="mt-px text-[13.500px] font-bold">{row.ward[0]}</T>
        <T w={row.bed[1]} className="mt-[2.500px] text-[13.500px] font-bold">{row.bed[0]}</T>
        <div className={`-ml-px h-[20px] border-l ${line}`} />
      </div>
      <div className="w-[75px] shrink-0">
        <T w={66.5} className="mt-px text-[14px]">{row.date}</T>
        <div className={`-ml-px h-[35px] border-l ${line}`} />
      </div>
      <div className={`w-[257px] shrink-0 ${ink}`}>
        <T w={row.doctor[1]} className="mt-px text-[14px] font-bold">{row.doctor[0]}</T>
        <T w={25.5} className="mt-[2px] text-[14px]">SUS</T>
        <div className={`-ml-px h-[19px] border-l ${line}`} />
      </div>
    </div>
  );
}

function BedGrid() {
  return (
    <div className="mx-1 flex h-[520px] shrink-0 border border-[#6f6f6f] bg-[#efefef]">
      <div className="flex w-[1240px] shrink-0 flex-col overflow-hidden">
        <div className="flex h-[50px] shrink-0 bg-[#000080] pt-[3px] text-[14px] font-bold text-[#f2f2f2]">
          <T w={28.500} className="ml-[15px]">Foto</T>
          <T w={10} className="ml-[26.500px]">**</T>
          <T w={5} className="ml-[27px]">*</T>
          <T w={40} className="ml-[20.500px]">Presc.</T>
          <T w={32.500} className="ml-[11.500px]">Evol.</T>
          <T w={45} className="ml-[8.500px]">Exame</T>
          <T w={58.500} className="ml-[5px]">Paciente</T>
          <T w={42.500} className="ml-[255.500px]">Atend.</T>
          <T w={188.500} className="ml-[27.500px]">Unidade de Internação/Leito</T>
          <T w={63.500} className="ml-[65px]">Internado</T>
          <T w={144} className="ml-[11.500px]">Profissional/Convênio</T>
        </div>
        {rows.map((r, i) => <GridRow key={r.code} row={r} index={i} />)}
        <div className="mt-[9px] ml-[18px] h-0.5 w-[18px] bg-[#8d8d8d]" />
      </div>
      <div className="mt-[17px] ml-[9px] h-[247px] w-0.5 bg-[#858585]" />
    </div>
  );
}

function DialogTab({ w, label, className = "" }: { w: number; label: string; className?: string }) {
  return (
    <div className={`mt-[3px] flex h-[40px] shrink-0 border border-l-0 border-[#e6e6e6] bg-[#f3f3f3] ${className}`}>
      <T w={w} className="mt-[13px] ml-[5.500px] text-[14px] font-bold">{label}</T>
    </div>
  );
}

function DialogFooter() {
  const bold = "text-[14px] font-bold";
  return (
    <div className="mt-[4px] flex h-[50px] shrink-0 border-t-2 border-b border-[#cacaca] bg-[#f0f0f0]">
      <Btn className="mt-[4px] ml-[7px] h-[39px] w-[132px] bg-[#fdfdfd]">
        <svg viewBox="0 0 14 14" className="mr-[6px] ml-[2px] size-[14px]">
          <path d="M1 2L4 0L7 5L11 0L14 1L9 7L13 13L9 14L6 10L3 14L0 12L4 7Z" fill="#9c0d0d" />
        </svg>
        <T w={89.500} className={bold}><u className="underline-offset-2">F</u>echar Busca</T>
      </Btn>
      <Btn className="mt-[4px] ml-[8.500px] h-[39px] w-[241px] !items-start !justify-start bg-[#fdfdfd] pt-px pl-px">
        <div className="flex w-[34px] flex-wrap gap-x-[4.500px] gap-y-[7px]"><Box /><Box /><Box /></div>
        <div className="mt-[9px] ml-[5px]"><Printer /></div>
        <T w={139.500} className={`mt-[11px] ml-1 ${bold}`}>Pacientes Internados</T>
        <div className="ml-[22.500px] flex flex-col gap-[7px]"><Box /><Box /></div>
      </Btn>
      <Btn className="mt-[4px] ml-[8.500px] h-[39px] w-[100px] !items-start !justify-start bg-[#fdfdfd] pt-px pl-[11px]">
        <div className="mt-[9px]"><Printer /></div>
        <T w={54} className={`mt-[11px] ml-1 ${bold}`}>Etiqueta</T>
        <Box className="-ml-[2px]" />
      </Btn>
      <Btn className="mt-[4px] ml-[2px] h-[39px] w-[98px] gap-[5px] bg-[#fdfdfd]"><Printer /><T w={59.500} className={bold}>TLP 2844</T></Btn>
      <Btn className="mt-[6px] ml-[3px] h-[38px] w-[98px] gap-[5px] bg-[#fdfdfd]"><Printer /><T w={66} className={bold}>Bematech</T></Btn>
      <T w={74} className={`mt-[16px] ml-[7px] ${bold}`}>Internados:</T>
      <T w={14.500} className={`mt-[16px] ml-[2px] text-[#1b1b8a] ${bold}`}>89</T>
      <div className="ml-[13.500px] flex w-[86px] flex-col">
        <T w={86} className={`text-[#15901c] ${bold}`}>Corona Vírus</T>
        <svg viewBox="0 0 54 29" className="mt-px ml-5 h-[29px] w-[54px] shrink-0 bg-[#c3c3c3]">
          <ellipse cx="27" cy="15" rx="23" ry="12" fill="none" stroke="#3a8f70" strokeWidth="5" strokeDasharray="4 5" />
          <ellipse cx="27" cy="15" rx="22" ry="11.500" fill="none" stroke="#e8182a" strokeWidth="4.500" strokeDasharray="3.500 5.500" />
          <ellipse cx="27" cy="15" rx="19" ry="10.500" fill="#ee1b26" />
          <ellipse cx="36" cy="15.500" rx="7" ry="4.500" fill="#14a0dc" stroke="#3a7f90" />
          <ellipse cx="19" cy="18" rx="5" ry="2.800" fill="#fff" />
          <circle cx="22" cy="10" r="1.800" fill="#3a7f60" />
        </svg>
      </div>
      <T w={95.500} className={`mt-[24px] ml-[20.500px] ${bold}`}>Temperatura:0</T>
      <T w={140} className={`mt-[2px] mr-[2px] ml-auto text-[#ee1c1c] ${bold}`}>* Indicação de Sepse</T>
    </div>
  );
}

function Dialog() {
  return (
    <div className={`absolute top-[110px] left-[166px] flex h-[676px] w-[1268px] flex-col overflow-hidden rounded-lg bg-[#f0f0f0] text-[#1b1b1b] shadow-[0_0_0_1px_rgba(110,110,110,0.45),0_22px_34px_rgba(0,0,0,0.42),0_2px_18px_rgba(0,0,0,0.16)] ${arial}`}>
      <div className="flex h-[27px] shrink-0 items-center bg-linear-to-r from-[#f9f0ee] via-[#edf4f8] via-45% to-[#edf2fa]">
        <T w={108} className={`mb-px ml-[4px] text-[13.500px] text-[#222] ${segoe}`}>Ocupação de Leitos</T>
        <X className="mr-[9px] mb-px ml-auto size-4" strokeWidth={1.6} />
      </div>
      <div className="flex h-7 shrink-0 items-center bg-[#a6c9f0]">
        <T w={39} className="mb-0.5 ml-2 text-[14px] font-bold">Busca</T>
        <div className="ml-0.5 h-[23px] w-[625px] border border-[#7e8788] bg-[#e1e2c3]" />
        <svg viewBox="0 0 13 17" className="ml-3 h-[17px] w-[13px]">
          <path d="M4.500 2.500V1H8.500V2.500M0.500 4.500H12.500M1 8L2 5M12 8L11 5" stroke="#222" fill="none" strokeWidth="1.400" />
          <rect x="0.500" y="2.500" width="12" height="2.500" fill="#444" />
          <path d="M2 5H11V16H2Z" fill="#999" stroke="#1a1a1a" strokeWidth="1.300" />
          <path d="M4.500 5V16M6.500 5V16M8.500 5V16" stroke="#1a1a1a" />
        </svg>
        <Box className="mb-px ml-[11px]" />
        <T w={91} className="mb-0.5 ml-[3px] text-[14px] font-bold">Busca Parcial</T>
        <div className="mr-[5px] ml-auto"><BookHelp /></div>
      </div>
      <div className="flex h-[48px] shrink-0 border-b-4 border-[#fafafa]">
        <div className="h-[48px] w-[86px] shrink-0 border-r border-[#e6e6e6] bg-[#fbfbfb] pl-2">
          <T w={70.500} className="mt-[15px] text-[14px] font-bold">Internados</T>
        </div>
        <DialogTab w={131.500} label="Busca por Unidades" className="-ml-px w-[142px]" />
        <DialogTab w={78.500} label="Distribuição" className="ml-px w-[91px]" />
        <DialogTab w={79.500} label="Emergência" className="w-[91px]" />
        <DialogTab w={82} label="Ambulatorio" className="w-[92px]" />
      </div>
      <BedGrid />
      <DialogFooter />
    </div>
  );
}

function ContextMenu() {
  return (
    <div className={`absolute top-[288px] left-[516px] flex h-[75px] w-[263px] flex-col rounded-[5px] bg-[#f9f9f9] px-[6px] pt-[3px] text-[13px] text-[#1f1f1f] shadow-[0_2px_6px_rgba(0,0,0,0.3)] ${segoe}`}>
      <div className="flex h-[23px] items-center pl-[33.500px]"><T w={133}>Mudar Paciente de Leito</T></div>
      <div className="flex h-[23px] items-center pl-[33.500px]"><T w={105.500}>Ficha de Beira Leito</T></div>
      <div className="flex h-[23px] items-center rounded-[3px] bg-[#f0f0f0] pl-[33.500px]"><T w={161.500}>Ir para Prescrição do Paciente</T></div>
    </div>
  );
}

export default function App() {
  return (
    <div className="relative flex h-[899px] w-[1600px] flex-col overflow-hidden bg-[#f0f0f0]">
      <TitleBar />
      <MenuBar />
      <HeaderBar />
      <AttendanceRow />
      <RecordArea />
      <UpperActions />
      <LowerActions />
      <StatusBar />
      <div className="absolute top-[115px] left-[1498px] h-[84px] w-[102px] overflow-hidden border-b border-[#888]">
        <Person className="h-[84px] w-[118px] max-w-none" />
      </div>
      <Dialog />
      <ContextMenu />
    </div>
  );
}
